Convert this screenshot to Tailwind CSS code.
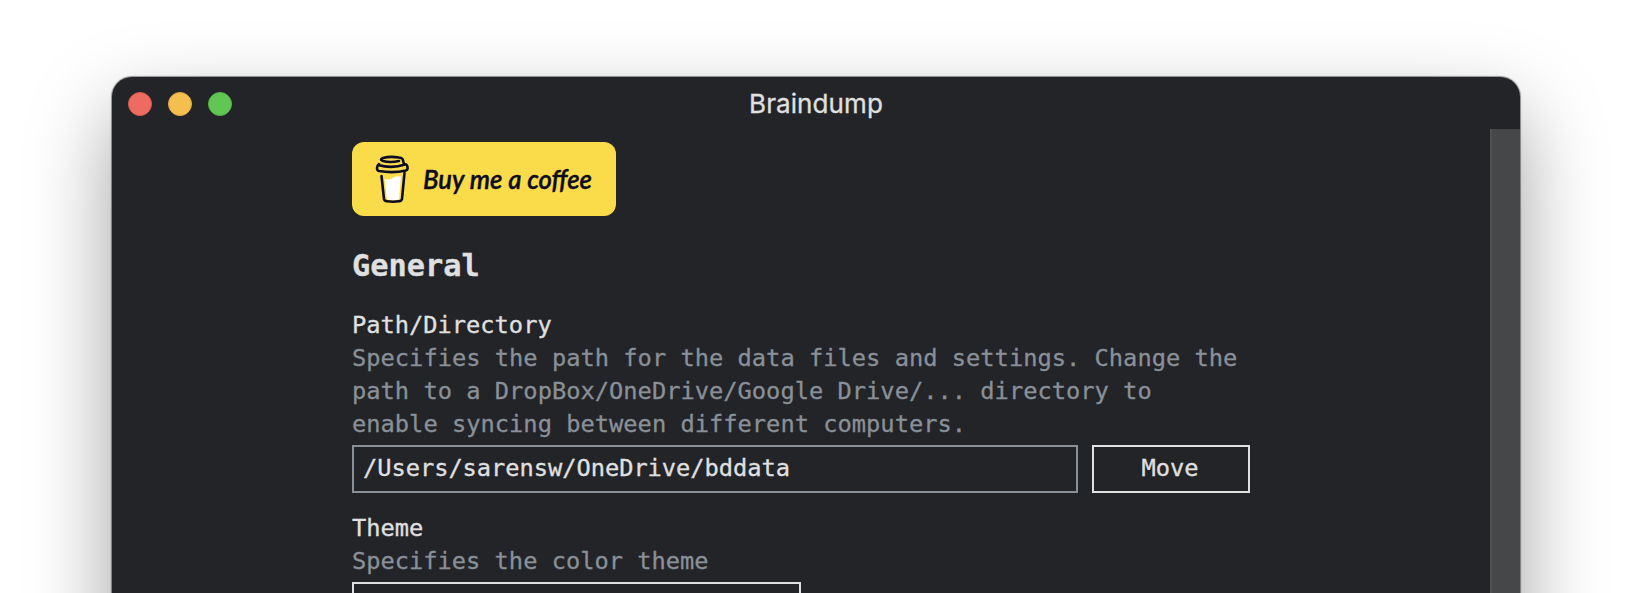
<!DOCTYPE html>
<html lang="en">
<head>
<meta charset="utf-8">
<title>Braindump</title>
<script src="https://cdn.jsdelivr.net/npm/@tailwindcss/browser@4"></script>
</head>
<body class="h-[593px] overflow-hidden bg-white px-[112px] pt-[77px]">
<div class="h-[900px] w-[1408px] rounded-[20px] bg-[#232428] shadow-[0_0_1px_1px_rgba(0,0,0,0.4),0_36px_84px_rgba(0,0,0,0.38)]">
  <header class="grid h-[52px] grid-cols-3 items-center px-4">
    <div class="flex gap-4 pt-0.5">
      <span class="size-6 rounded-full border border-[#d95a50] bg-[#ed6b60]"></span>
      <span class="size-6 rounded-full border border-[#dfa845] bg-[#f5bf50]"></span>
      <span class="size-6 rounded-full border border-[#55b244] bg-[#62c655]"></span>
    </div>
    <h1 class="pt-0.5 text-center font-['Inter',sans-serif] text-[26px] leading-[50px] tracking-[0.1px] text-[#e0e0e0] [-webkit-text-stroke:0.3px_#e0e0e0]">Braindump</h1>
  </header>
  <div class="flex h-[800px] justify-between">
    <main class="ml-[240px] w-[898px] pt-[13px] font-['DejaVu_Sans_Mono',monospace] text-[23.7px] leading-[33px] text-[#e0e0e0] [-webkit-text-stroke-width:0.3px]">
      <a class="flex h-[74px] w-[264px] items-center rounded-xl bg-[#fadc4b]">
        <svg class="h-[74px] w-[264px]" viewBox="0 0 264 74" fill="none" stroke="#0d0c22" stroke-width="2.6" stroke-linecap="round" stroke-linejoin="round">
          <path d="M32.500 37q5 1.500 8-1t8.500-1.500l-2 23q-6 1.500-12 0z" fill="#fff" stroke="none"/>
          <path d="M29.500 34l2.500 23q.3 2 3 2.300 6 .8 12 0 2.500-.3 3-2.300l2.500-26"/>
          <path d="M26 23q14 4 27-.5 2-.5 2.500 2.500t-1.500 3.500q-13 3-27 .5-2-.5-2-3t2-4"/>
          <path d="M47 19q-9 2-16 0-4-1.500 0-3 7-2 16-.5 4 .5 4 3l1 3.500"/>
          <text x="71" y="47" textLength="169" lengthAdjust="spacingAndGlyphs" fill="#0d0c22" stroke="#0d0c22" stroke-width="0.4" font-family="Lato, sans-serif" font-size="27" font-style="italic" font-weight="600">Buy me a coffee</text>
        </svg>
      </a>
      <h2 class="mt-[30px] text-[30.3px] leading-[40px] font-bold">General</h2>
      <section class="mt-[23px]">
        <h3>Path/Directory</h3>
        <p class="text-[23.72px] text-[#899097]">Specifies the path for the data files and settings. Change the path to a DropBox/OneDrive/Google Drive/... directory to enable syncing between different computers.</p>
        <div class="mt-1 flex gap-[14px]">
          <div class="flex h-12 w-[726px] items-center border-2 border-[#899097] pb-0.5 pl-[9px] tracking-[-0.03px]">/Users/sarensw/OneDrive/bddata</div>
          <button class="h-12 w-[158px] border-2 border-[#e0e0e0] pr-0.5 pb-0.5">Move</button>
        </div>
      </section>
      <section class="mt-[19px]">
        <h3>Theme</h3>
        <p class="text-[#899097]">Specifies the color theme</p>
        <div class="mt-1 h-12 w-[449px] border-2 border-[#e0e0e0]"></div>
      </section>
    </main>
    <div class="w-[30px] border-l-2 border-[#505153] bg-[#464749]"></div>
  </div>
</div>
</body>
</html>
